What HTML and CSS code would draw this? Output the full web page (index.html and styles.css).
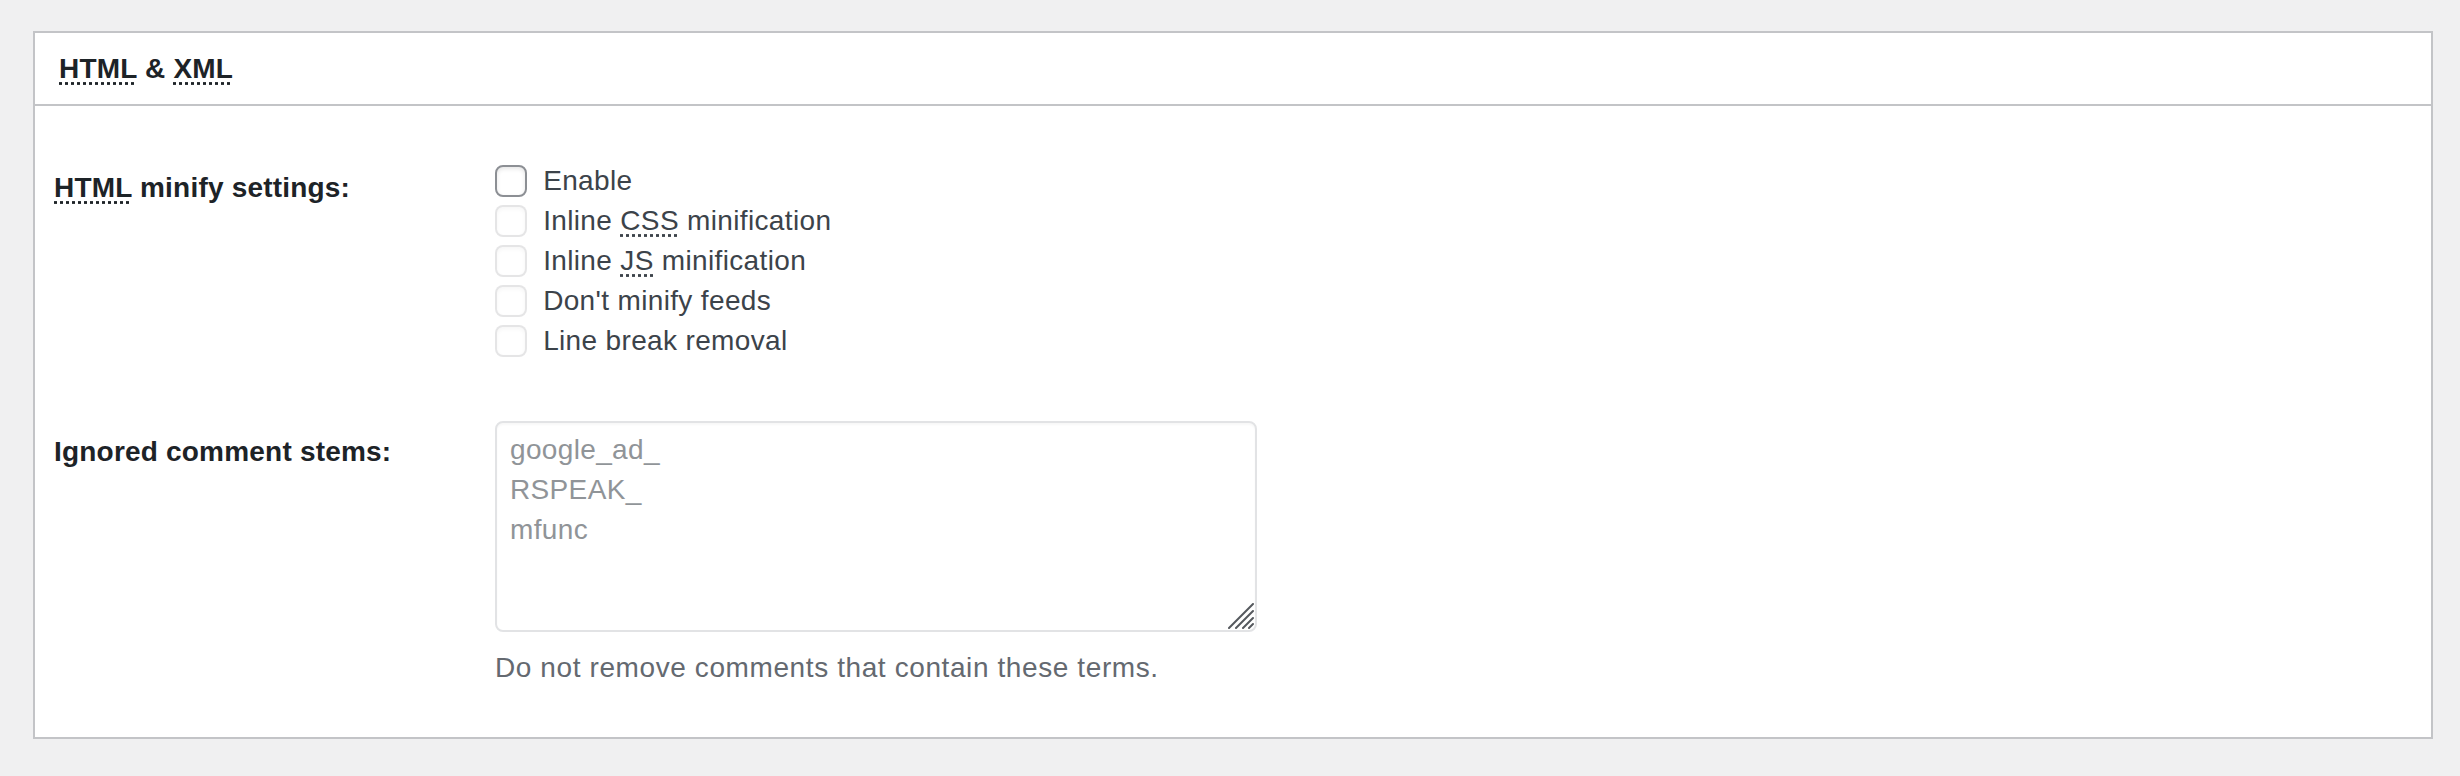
FILE: index.html
```html
<!DOCTYPE html>
<html lang="en">
<head>
<meta charset="utf-8">
<title>HTML &amp; XML</title>
<link rel="stylesheet" href="styles.css">
</head>
<body>
<div class="page">
  <div class="postbox">
    <h3 class="hndle"><abbr title="Hypertext Markup Language">HTML</abbr> &amp; <abbr title="eXtensible Markup Language">XML</abbr></h3>
    <div class="inside">
      <div class="row row-minify">
        <div class="label"><abbr title="Hypertext Markup Language">HTML</abbr> minify settings:</div>
        <div class="field">
          <label class="check"><input type="checkbox" class="cb"> Enable</label>
          <label class="check"><input type="checkbox" class="cb" disabled> Inline <abbr title="Cascading Style Sheet">CSS</abbr> minification</label>
          <label class="check"><input type="checkbox" class="cb" disabled> Inline <abbr title="JavaScript">JS</abbr> minification</label>
          <label class="check"><input type="checkbox" class="cb" disabled> Don't minify feeds</label>
          <label class="check"><input type="checkbox" class="cb" disabled> Line break removal</label>
        </div>
      </div>
      <div class="row row-stems">
        <div class="label label-stems">Ignored comment stems:</div>
        <div class="field">
          <div class="ta-wrap">
            <textarea class="stems" disabled>google_ad_
RSPEAK_
mfunc</textarea>
            <svg class="grip" width="26" height="26" viewBox="0 0 26 26" aria-hidden="true">
              <path d="M1 25 L25 1 M8 25 L25 8 M15 25 L25 15 M21 25 L25 21" stroke="#55595e" stroke-width="2" stroke-linecap="round" fill="none"/>
            </svg>
          </div>
          <p class="desc">Do not remove comments that contain these terms.</p>
        </div>
      </div>
    </div>
  </div>
</div>
</body>
</html>
```

FILE: styles.css
```css
html, body {
  margin: 0;
  padding: 0;
  background: #f0f0f1;
}

body {
  font-family: "Liberation Sans", Arial, sans-serif;
  font-size: 28px;
  color: #3c434a;
}

.page {
  padding: 31px 0 0 33px;
}

.postbox {
  width: 2396px;
  height: 704px;
  background: #fff;
  border: 2px solid #c3c4c7;
}

.hndle {
  margin: 0;
  padding: 16px 24px;
  height: 39px;
  font-size: 28px;
  line-height: 39px;
  font-weight: 700;
  color: #1d2327;
  border-bottom: 2px solid #c3c4c7;
  letter-spacing: 0.2px;
}

abbr[title] {
  text-decoration: underline dotted;
  text-underline-offset: 4px;
}

.inside {
  display: flex;
  flex-direction: column;
}

.row {
  display: grid;
  grid-template-columns: 441px 1fr;
  padding-left: 19px;
}

.row-minify {
  padding-top: 55px;
}

.row-stems {
  padding-top: 60px;
}

.label {
  font-weight: 700;
  color: #1d2327;
  line-height: 40px;
  padding-top: 7px;
  letter-spacing: 0.2px;
}

.label-stems {
  padding-top: 11px;
}

.field {
  display: flex;
  flex-direction: column;
  align-items: flex-start;
  letter-spacing: 0.35px;
}

.check {
  display: flex;
  align-items: center;
  height: 40px;
  line-height: 40px;
  white-space: pre;
}

.cb {
  -webkit-appearance: none;
  appearance: none;
  width: 32px;
  height: 32px;
  margin: 0 8px 0 0;
  box-sizing: border-box;
  border: 2px solid #8c8f94;
  border-radius: 8px;
  background: #fff;
  box-shadow: inset 0 2px 4px rgba(0, 0, 0, 0.1);
  flex: none;
}

.cb:disabled {
  border-color: rgba(220, 220, 222, 0.75);
  background: rgba(255, 255, 255, 0.5);
  box-shadow: inset 0 2px 4px rgba(0, 0, 0, 0.04);
}

.ta-wrap {
  position: relative;
  width: 762px;
  height: 211px;
}

.stems {
  box-sizing: border-box;
  display: block;
  width: 762px;
  height: 211px;
  margin: 0;
  padding: 7px 13px;
  border: 2px solid #e2e3e5;
  border-radius: 8px;
  background: #fff;
  font-family: "Liberation Sans", Arial, sans-serif;
  font-size: 28px;
  line-height: 40px;
  letter-spacing: 0.35px;
  color: #909498;
  resize: none;
  box-shadow: inset 0 2px 2px rgba(0, 0, 0, 0.03);
}

.grip {
  position: absolute;
  right: 3px;
  bottom: 3px;
}

.desc {
  margin: 16px 0 0;
  line-height: 40px;
  color: #646970;
  letter-spacing: 0.6px;
}
```
